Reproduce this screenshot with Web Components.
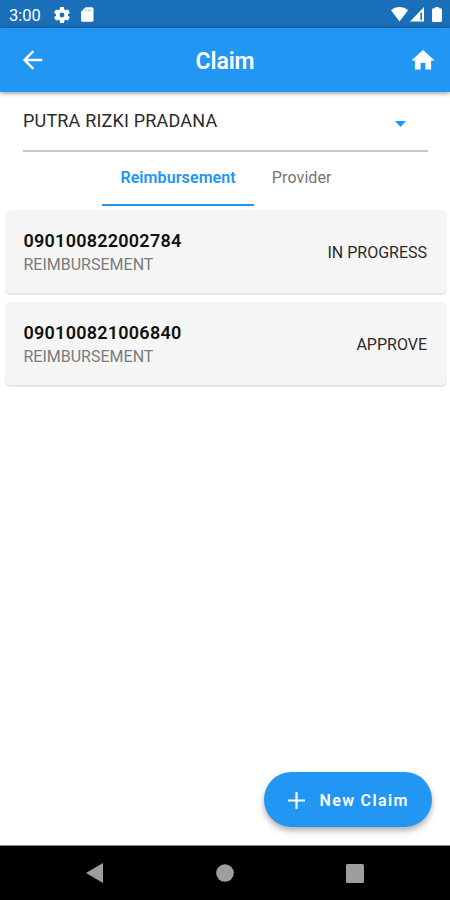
<!DOCTYPE html>
<html lang="en">
<head>
<meta charset="utf-8">
<meta name="viewport" content="width=device-width, initial-scale=1">
<title>Claim</title>
<style>
  html, body {
    height: 100%;
    margin: 0;
  }
  body {
    font-family: Roboto, sans-serif;
    --primary: #2196f3;
    --primary-dark: #1a70b8;
  }
</style>
</head>
<body>
<claim-app></claim-app>

<script>
const define = (name, html) => {
  customElements.define(name, class extends HTMLElement {
    constructor() {
      super();
      this.attachShadow({ mode: 'open' });
      this.shadowRoot.innerHTML = html;
    }
  });
};

define('status-bar', `
  <style>
    :host {
      display: flex;
      align-items: center;
      height: 28px;
      box-sizing: border-box;
      padding: 1px 8px 0 9px;
      background: var(--primary-dark);
      color: #fff;
      font-size: 16.5px;
      line-height: 27px;
    }
    svg { display: block; fill: #fff; }
    .time { width: 45px; padding-top: 1px; }
    .gear { margin-right: 11px; }
    .wifi { margin-left: auto; margin-right: 2px; }
    .signal { margin-right: 8px; }
  </style>
  <span class="time">3:00</span>
  <svg class="gear" width="16" height="16" viewBox="2 2 20 20"><path d="M19.43 12.98c.04-.32.07-.64.07-.98s-.03-.66-.07-.98l2.11-1.65c.19-.15.24-.42.12-.64l-2-3.46c-.12-.22-.39-.3-.61-.22l-2.49 1c-.52-.4-1.08-.73-1.69-.98l-.38-2.65C14.46 2.18 14.25 2 14 2h-4c-.25 0-.46.18-.49.42l-.38 2.65c-.61.25-1.17.59-1.69.98l-2.49-1c-.23-.09-.49 0-.61.22l-2 3.46c-.13.22-.07.49.12.64l2.11 1.65c-.04.32-.07.65-.07.98s.03.66.07.98l-2.11 1.65c-.19.15-.24.42-.12.64l2 3.46c.12.22.39.3.61.22l2.49-1c.52.4 1.08.73 1.69.98l.38 2.65c.03.24.24.42.49.42h4c.25 0 .46-.18.49-.42l.38-2.65c.61-.25 1.17-.59 1.69-.98l2.49 1c.23.09.49 0 .61-.22l2-3.46c.12-.22.07-.49-.12-.64zM12 15a3 3 0 1 1 0-6 3 3 0 0 1 0 6z"/></svg>
  <svg width="12.500" height="15" viewBox="0 0 12 15" preserveAspectRatio="none"><path d="M4.300.3h6.200Q12 .3 12 1.800v11.400q0 1.500-1.500 1.500h-9Q0 14.700 0 13.200V4.800z"/><path d="M4.300 2.500h1.100v1.600H4.300zM6.500 2.500h1.100v1.600H6.500zM8.700 2.500h1.100v1.600H8.700z" fill="#8db9dd"/></svg>
  <svg class="wifi" width="17" height="15" viewBox="0 0 17 15"><path d="M0 3.300C5-1.100 12-1.100 17 3.300L8.500 14.500z"/></svg>
  <svg class="signal" width="14" height="15" viewBox="0 0 14 15"><path fill-rule="evenodd" d="M14 0v14.500H0zM10.400 5.600v7.400H12V5.600z"/></svg>
  <svg width="10" height="15" viewBox="0 0 10 15"><path d="M3 0h4v1.200h1.500q1.500 0 1.500 1.500v10.800q0 1.500-1.500 1.500h-7Q0 15 0 13.500V2.700q0-1.500 1.500-1.500H3z"/></svg>
`);

define('app-bar', `
  <style>
    :host {
      display: grid;
      grid-template-columns: 1fr auto 1fr;
      align-items: center;
      height: 64px;
      box-sizing: border-box;
      padding: 0 15px 0 22px;
      background: var(--primary);
      color: #fff;
      box-shadow: 0 1px 5px rgba(0, 0, 0, .45);
      position: relative;
    }
    svg { display: block; }
    .title {
      font-size: 23px;
      font-weight: 600;
      line-height: 28px;
      padding-top: 3px;
      margin-right: 7px;
      letter-spacing: -.1px;
    }
    .home { justify-self: end; fill: #fff; }
  </style>
  <svg width="22" height="20" viewBox="0 0 22 20" fill="none" stroke="#fff" stroke-width="2.400" stroke-linecap="round"><path d="M19.300 10H3M10.700 1.800L2.500 10l8.200 8.200"/></svg>
  <span class="title"><slot></slot></span>
  <svg class="home" width="24" height="20" viewBox="0 0 24 20"><path d="M9.600 19.500v-6.600h4.800v6.600h5.700v-9h3.500L12 0 .4 10.500h3.500v9z"/></svg>
`);

define('member-select', `
  <style>
    :host {
      display: flex;
      align-items: center;
      justify-content: space-between;
      height: 60px;
      box-sizing: border-box;
      margin: 0 22px 0 23px;
      padding: 0 22px 1px 0;
      border-bottom: 2px solid #c8c8c8;
      color: #2a2a2a;
      font-size: 18px;
      line-height: 24px;
      letter-spacing: .19px;
    }
    svg { display: block; margin-top: 6px; fill: var(--primary); }
  </style>
  <span><slot></slot></span>
  <svg width="11" height="6" viewBox="0 0 11 6"><path d="M0 0h11L5.500 6z"/></svg>
`);

define('claim-tabs', `
  <style>
    :host {
      display: flex;
      justify-content: center;
      height: 54px;
      padding-left: 2px;
    }
  </style>
  <slot></slot>
`);

define('claim-tab', `
  <style>
    :host {
      display: block;
      box-sizing: border-box;
      height: 54px;
      padding: 14px 18px 0;
      color: #757575;
      font-size: 16px;
      line-height: 24px;
      letter-spacing: .1px;
    }
    :host([active]) {
      color: var(--primary);
      font-weight: 600;
      border-bottom: 2px solid var(--primary);
    }
  </style>
  <slot></slot>
`);

define('claim-card', `
  <style>
    :host {
      display: flex;
      align-items: center;
      justify-content: space-between;
      height: 83px;
      box-sizing: border-box;
      padding: 1px 20px 0 18.5px;
      border-radius: 5px;
      background: #f5f5f5;
      box-shadow: 0 2px 1px rgba(0, 0, 0, .1);
      color: #2a2a2a;
      font-size: 16px;
    }
    .number {
      font-size: 18px;
      font-weight: 600;
      line-height: 24px;
      letter-spacing: .25px;
      color: #111;
      padding-top: 1px;
    }
    .type {
      line-height: 24px;
      color: #7b7b7b;
    }
  </style>
  <div>
    <div class="number"><slot name="number"></slot></div>
    <div class="type"><slot name="type"></slot></div>
  </div>
  <slot></slot>
`);

define('new-button', `
  <style>
    :host {
      display: flex;
      align-items: center;
      gap: 15px;
      width: 168px;
      height: 55px;
      box-sizing: border-box;
      padding: 1px 0 0 23.5px;
      border-radius: 28px;
      background: var(--primary);
      box-shadow: 0 3px 5px rgba(0, 0, 0, .22), 0 5px 9px rgba(0, 0, 0, .12);
      color: #fff;
      font-size: 16px;
      font-weight: 600;
      letter-spacing: 1.35px;
      white-space: nowrap;
    }
    svg { display: block; }
  </style>
  <svg width="17" height="17" viewBox="0 0 17 17" stroke="#fff" stroke-width="2.200"><path d="M8.500 0v17M0 8.500h17"/></svg>
  <span><slot></slot></span>
`);

define('nav-bar', `
  <style>
    :host {
      display: flex;
      align-items: center;
      justify-content: space-between;
      height: 55px;
      box-sizing: border-box;
      padding: 0 86px;
      border-top: 1px solid #8a8a8a;
      background: #000;
    }
    svg { display: block; fill: #9e9e9e; }
  </style>
  <svg width="17" height="20" viewBox="0 0 17 20"><path d="M17 0v20L0 10z"/></svg>
  <svg width="18" height="18" viewBox="0 0 18 18"><circle cx="9" cy="9" r="8.800"/></svg>
  <svg width="18" height="19" viewBox="0 0 18 19"><rect width="18" height="19" rx="1.500"/></svg>
`);

define('claim-app', `
  <style>
    :host {
      display: flex;
      flex-direction: column;
      position: relative;
      height: 100vh;
      background: #fff;
      overflow: hidden;
    }
    main { flex: 1; }
    .list {
      display: grid;
      gap: 9px;
      padding: 4px 3px 0 5px;
    }
    /* floats over the list */
    new-button {
      position: absolute;
      right: 18px;
      bottom: 73px;
    }
  </style>
  <status-bar></status-bar>
  <app-bar>Claim</app-bar>
  <main>
    <member-select>PUTRA RIZKI PRADANA</member-select>
    <claim-tabs>
      <claim-tab active>Reimbursement</claim-tab>
      <claim-tab>Provider</claim-tab>
    </claim-tabs>
    <div class="list">
      <claim-card>
        <span slot="number">090100822002784</span>
        <span slot="type">REIMBURSEMENT</span>
        IN PROGRESS
      </claim-card>
      <claim-card>
        <span slot="number">090100821006840</span>
        <span slot="type">REIMBURSEMENT</span>
        APPROVE
      </claim-card>
    </div>
  </main>
  <new-button>New Claim</new-button>
  <nav-bar></nav-bar>
`);
</script>
</body>
</html>
